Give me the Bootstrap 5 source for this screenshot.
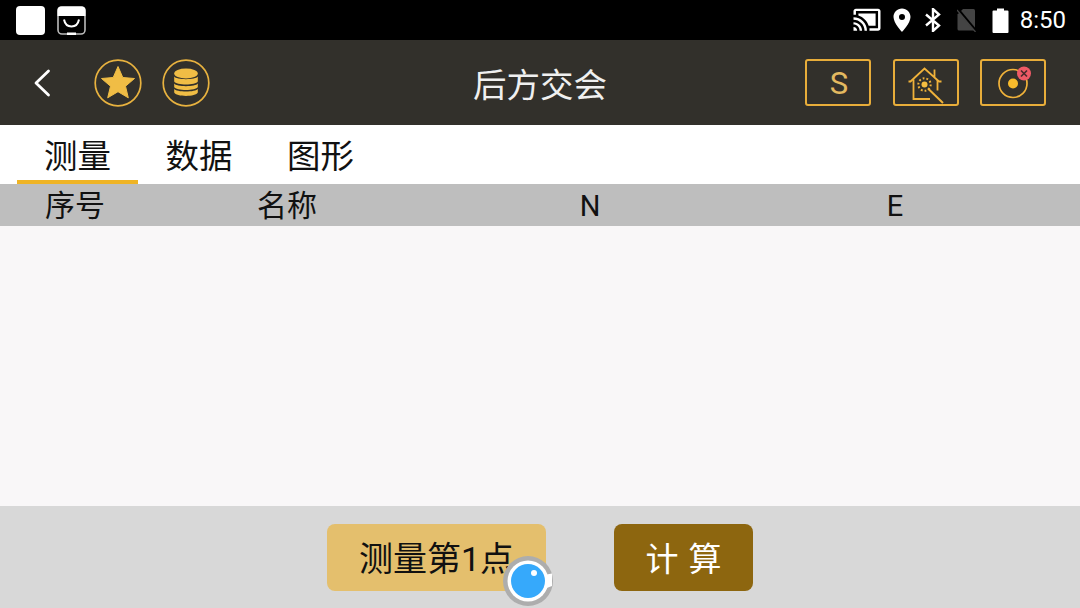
<!DOCTYPE html>
<html lang="en">
<head>
    <meta charset="UTF-8">
    <meta name="viewport" content="width=device-width, initial-scale=1.0">
    <title>后方交会</title>
    <link href="https://cdn.jsdelivr.net/npm/bootstrap@5.3.0/dist/css/bootstrap.min.css" rel="stylesheet">
    <style>
        body {
            margin: 0;
            background: #d8d8d8;
            font-family: Roboto, "Noto Sans CJK SC", sans-serif;
            overflow: hidden;
        }
        .app-screen { width: 1080px; height: 608px; position: relative; }

        /* status bar */
        .status-strip { height: 40px; background: #000; padding: 0 14px 0 16px; }
        .app-square { width: 29px; height: 29px; background: #fff; border-radius: 4px; margin-right: 12px; }
        .status-time { color: #fff; font-size: 24px; line-height: 40px; margin-left: 11px; }
        .cast-icon { margin-right: 12px; }
        .pin-icon { margin-right: 14px; }
        .bt-icon { margin-right: 16px; }
        .sim-icon { margin-right: 15px; }

        /* header */
        .top-bar { height: 85px; background: #32302b; padding: 0 34px; position: relative; }
        .back-btn { margin-right: 43px; }
        .round-btn { margin-right: 20px; }
        .top-title {
            position: absolute; left: 0; right: 0; top: 0;
            line-height: 91px; text-align: center;
            color: #f0f0f0; font-size: 33.5px;
        }
        .tool-btn {
            width: 66px; height: 47px;
            border: 2px solid #e8ad3a; border-radius: 3px;
            color: #e3b960; font-size: 31px;
            background: transparent; padding: 0;
        }
        .tool-btn svg { overflow: visible; }
        .tool-letter { padding-top: 4px; padding-left: 2px; }
        .tool-gap { gap: 21.5px; position: relative; }

        /* tabs */
        .tab-strip { height: 59px; background: #fff; padding-left: 17px; gap: 0.5px; }
        .tab-item {
            width: 121px; height: 59px; text-align: center;
            font-size: 33.5px; line-height: 63px; color: #111;
        }
        .tab-active { border-bottom: 4px solid #efb425; }

        /* table */
        .head-row {
            height: 42px; background: #bebebe; color: #111;
            display: grid; grid-template-columns: 150px 274px 332px 278px;
            font-size: 30px; line-height: 43px; text-align: center;
        }
        .head-row span:nth-child(n+3) { font-size: 29px; line-height: 45px; }
        .table-body { height: 280px; background: #f9f7f8; }

        /* footer */
        .foot-bar { height: 102px; background: #d8d8d8; padding: 18px 0 0 327px; gap: 68px; }
        .measure-btn, .calc-btn {
            height: 67px; border: 0; border-radius: 8px; padding: 3px 0 0;
            font-size: 34px; line-height: 1;
        }
        .measure-btn { width: 219px; background: #e4bf6d; color: #111; }
        .calc-btn { width: 139px; background: #8d660f; color: #fff; font-size: 33px; word-spacing: 2px; }

        /* floating assistive ball */
        .float-ball { position: absolute; left: 502px; top: 555px; }
    </style>
</head>
<body>
<div class="app-screen">
    <!-- status bar -->
    <div class="status-strip d-flex align-items-center">
        <div class="app-square"></div>
        <svg width="29" height="29" viewBox="0 0 29 29">
            <rect x="1" y="1" width="27" height="27" rx="4" fill="#000" stroke="#bbb" stroke-width="1.600"/>
            <path d="M4 0.500H25a3.500 3.500 0 0 1 3.500 3.500V10H0.500V4A3.500 3.500 0 0 1 4 0.500Z" fill="#fff"/>
            <path d="M7 13.500c1 5 4 7 7.500 7S21 18.500 22 13.500" fill="none" stroke="#fff" stroke-width="2"/>
            <rect x="10" y="26.500" width="9" height="2.500" fill="#fff"/>
        </svg>
        <div class="ms-auto d-flex align-items-center">
            <svg class="cast-icon" width="28" height="24" viewBox="0.600 2.500 22.800 19.500">
                <path d="M1 18v3h3c0-1.660-1.340-3-3-3zm0-4v2c2.760 0 5 2.240 5 5h2c0-3.870-3.130-7-7-7zm18-7H5v1.630c3.960 1.280 7.090 4.410 8.370 8.370H19V7zM1 10v2c4.970 0 9 4.030 9 9h2c0-6.080-4.930-11-11-11zm20-7H3c-1.100 0-2 .9-2 2v3h2V5h18v14h-7v2h7c1.100 0 2-.9 2-2V5c0-1.100-.9-2-2-2z" fill="#fff"/>
            </svg>
            <svg class="pin-icon" width="18" height="24" viewBox="0 0 18 24">
                <path fill-rule="evenodd" d="M9 0.500C4.200 0.500 0.500 4.200 0.500 9 0.500 15 9 24 9 24S17.500 15 17.500 9C17.500 4.200 13.800 0.500 9 0.500ZM9 12A3 3 0 1 1 9 6 3 3 0 0 1 9 12Z" fill="#fff"/>
            </svg>
            <svg class="bt-icon" width="16" height="24" viewBox="0 0 16 24">
                <path d="M1 6.500L14 17.500L8 23V1L14 6.500L1 17.500" fill="none" stroke="#fff" stroke-width="2.400"/>
            </svg>
            <svg class="sim-icon" width="20" height="24" viewBox="0 0 20 24">
                <path d="M6 1H16.500a1.500 1.500 0 0 1 1.500 1.500V21a1.500 1.500 0 0 1-1.500 1.500H2A1.500 1.500 0 0 1 .5 21V6.500Z" fill="#444"/>
                <path d="M0.500 0.500L20 24" stroke="#000" stroke-width="2.500"/>
                <path d="M0 2L18.500 24" stroke="#444" stroke-width="1.200"/>
            </svg>
            <svg width="17" height="25" viewBox="0 0 17 25">
                <path d="M5 0.500H12V2.500H15.500a1 1 0 0 1 1 1V24a1 1 0 0 1-1 1H1.500a1 1 0 0 1-1-1V3.500a1 1 0 0 1 1-1H5Z" fill="#fff"/>
            </svg>
            <span class="status-time">8:50</span>
        </div>
    </div>

    <!-- header -->
    <div class="top-bar d-flex align-items-center">
        <div class="top-title">后方交会</div>
        <svg class="back-btn" width="17" height="28" viewBox="0 0 17 28">
            <path d="M14.500 2L2 14L14.500 26" fill="none" stroke="#fff" stroke-width="2.800" stroke-linecap="round" stroke-linejoin="round"/>
        </svg>
        <svg class="round-btn" width="48" height="48" viewBox="0 0 48 48">
            <circle cx="24" cy="24" r="22.800" fill="none" stroke="#e8b23f" stroke-width="1.700"/>
            <path d="M24 7.500L28.800 18.500L40.500 19.500L31.500 27.200L34.300 38.800L24 32.700L13.700 38.800L16.500 27.200L7.500 19.500L19.200 18.500Z" fill="#f0bd45" stroke="#f0bd45" stroke-linejoin="round"/>
        </svg>
        <svg width="48" height="48" viewBox="0 0 48 48">
            <circle cx="24" cy="24" r="22.800" fill="none" stroke="#e8b23f" stroke-width="1.700"/>
            <ellipse cx="24" cy="14.500" rx="11.800" ry="5" fill="#f0bd45"/>
            <path d="M12.200 17.500C14 21 34 21 35.800 17.500V22.500C34 26.500 14 26.500 12.200 22.500Z" fill="#f0bd45"/>
            <path d="M12.200 24.500C14 28 34 28 35.800 24.500V28C34 32 14 32 12.200 28Z" fill="#f0bd45"/>
            <path d="M12.200 29.800C14 33.500 34 33.500 35.800 29.800V33.500C34 38 14 38 12.200 33.500Z" fill="#f0bd45"/>
        </svg>
        <div class="ms-auto d-flex tool-gap">
            <button class="tool-btn tool-letter d-flex align-items-center justify-content-center" type="button">S</button>
            <button class="tool-btn d-flex align-items-center justify-content-center" type="button">
                <svg width="36" height="36" viewBox="0 0 36 36">
                    <path d="M0.500 16.500H2.500L16.500 3.500L26.500 12.500V4.500M26.500 12.500L31 16.500H33.500" fill="none" stroke="#f0b23a" stroke-width="1.800"/>
                    <path d="M5.500 14.500V34H22M29.500 15V25.500" fill="none" stroke="#f0b23a" stroke-width="1.800"/>
                    <path d="M20 23.500L35 38" stroke="#f0b23a" stroke-width="2"/>
                    <circle cx="16.500" cy="19.500" r="3" fill="#f5bd40"/>
                    <circle cx="16.500" cy="19.500" r="6.200" fill="none" stroke="#f0b23a" stroke-width="2" stroke-dasharray="1.800 2"/>
                </svg>
            </button>
            <button class="tool-btn d-flex align-items-center justify-content-center" type="button">
                <svg width="40" height="36" viewBox="0 0 40 36">
                    <circle cx="20" cy="18.500" r="14" fill="none" stroke="#f0b23a" stroke-width="1.700"/>
                    <circle cx="20" cy="18.500" r="5" fill="#f8bb2c"/>
                    <circle cx="31" cy="8.500" r="7" fill="#ee5a66"/>
                    <path d="M28 5.500L34 11.500M34 5.500L28 11.500" stroke="#4a2a2a" stroke-width="1.700"/>
                </svg>
            </button>
        </div>
    </div>

    <!-- tabs -->
    <div class="tab-strip d-flex">
        <div class="tab-item tab-active">测量</div>
        <div class="tab-item">数据</div>
        <div class="tab-item">图形</div>
    </div>

    <!-- table -->
    <div class="head-row">
        <span>序号</span>
        <span>名称</span>
        <span>N</span>
        <span>E</span>
    </div>
    <div class="table-body"></div>

    <!-- footer -->
    <div class="foot-bar d-flex">
        <button class="measure-btn" type="button">测量第1点</button>
        <button class="calc-btn" type="button">计 算</button>
    </div>

    <svg class="float-ball" width="52" height="52" viewBox="0 0 52 52">
        <circle cx="26" cy="26" r="25" fill="#adadad"/>
        <circle cx="26" cy="26" r="20.500" fill="#fff"/>
        <path d="M42 20L50 18.500V31L42 34Z" fill="#fff"/>
        <circle cx="26" cy="26" r="17" fill="#36a9fb"/>
        <circle cx="32" cy="18" r="3" fill="#fff"/>
    </svg>
</div>

<script src="https://cdn.jsdelivr.net/npm/bootstrap@5.3.0/dist/js/bootstrap.bundle.min.js"></script>
</body>
</html>
